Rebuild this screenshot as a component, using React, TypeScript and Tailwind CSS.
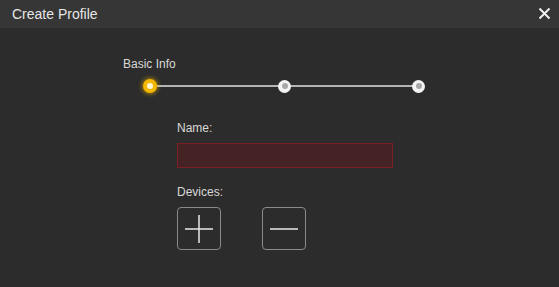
import React from "react";

export default function App() {
  return (
    <div className="w-[559px] h-[287px] bg-[#2c2c2c] flex flex-col overflow-hidden" style={{ fontFamily: '"Liberation Sans", Arial, sans-serif' }}>
      <div className="h-[28px] bg-[#363636] flex items-center justify-between pl-[12px] pr-[8px] shrink-0">
        <span className="text-[14px] text-[#e6e6e6] leading-none">Create Profile</span>
        <svg width="13" height="13" viewBox="0 0 13 13" className="mt-[-2px]">
          <path d="M1.5 1.5 L11.5 11.5 M11.5 1.5 L1.5 11.5" stroke="#f0f0f0" strokeWidth="2" />
        </svg>
      </div>
      <div className="flex-1 flex flex-col pt-[29px] pl-[123px]">
        <div className="text-[12px] text-[#d8d8d8] leading-[14px]">Basic Info</div>
        <div className="relative w-[282px] h-[16px] ml-[20px] mt-[7px] flex items-center justify-between">
          <div className="absolute left-[6px] right-[6px] top-[7px] h-[2px] bg-[#b4b4b4]" />
          <div className="relative w-[14px] h-[14px] rounded-full bg-[#f5b800] shadow-[0_0_4px_1px_rgba(245,184,0,0.6)] flex items-center justify-center">
            <div className="w-[6px] h-[6px] rounded-full bg-[#fff6d6]" />
          </div>
          <div className="relative w-[13px] h-[13px] rounded-full bg-[#f4f4f4] flex items-center justify-center">
            <div className="w-[6px] h-[6px] rounded-full bg-[#a8a8a8]" />
          </div>
          <div className="relative w-[13px] h-[13px] rounded-full bg-[#f4f4f4] flex items-center justify-center">
            <div className="w-[6px] h-[6px] rounded-full bg-[#a8a8a8]" />
          </div>
        </div>
        <div className="ml-[54px] mt-[27px] flex flex-col">
          <div className="text-[12px] text-[#d8d8d8] leading-[14px]">Name:</div>
          <div className="mt-[8px] w-[216px] h-[25px] bg-[#452324] border border-[#7c1f25]" />
          <div className="mt-[17px] text-[12px] text-[#d8d8d8] leading-[14px]">Devices:</div>
          <div className="mt-[8px] flex gap-[41px]">
            <div className="w-[44px] h-[43px] rounded-[4px] border border-[#8a8a8a] flex items-center justify-center">
              <svg width="28" height="28" viewBox="0 0 28 28">
                <path d="M0 14 H28 M14 0 V28" stroke="#e8e8e8" strokeWidth="1.5" />
              </svg>
            </div>
            <div className="w-[44px] h-[43px] rounded-[4px] border border-[#8a8a8a] flex items-center justify-center">
              <svg width="28" height="28" viewBox="0 0 28 28">
                <path d="M0 14 H28" stroke="#e8e8e8" strokeWidth="1.5" />
              </svg>
            </div>
          </div>
        </div>
      </div>
    </div>
  );
}
